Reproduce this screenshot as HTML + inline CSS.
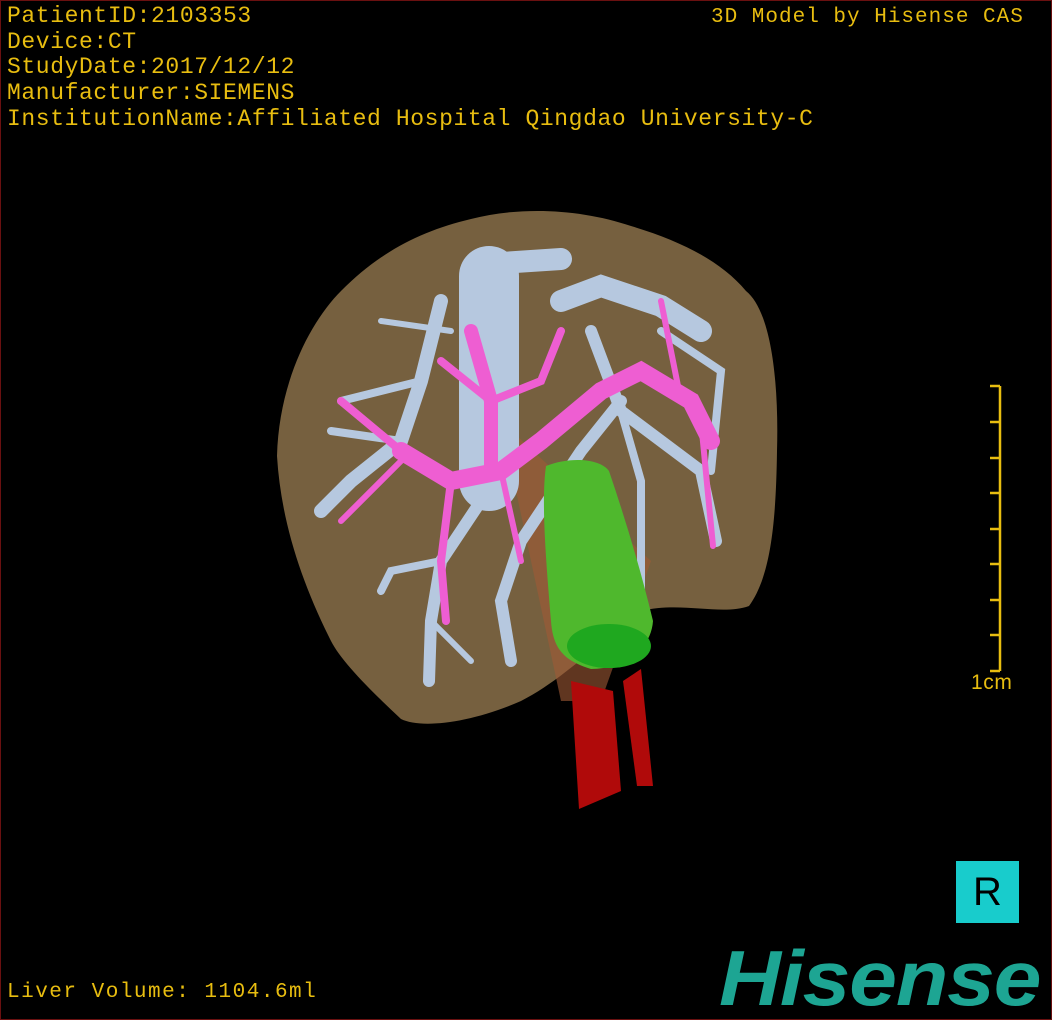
<!DOCTYPE html>
<html><head><meta charset="utf-8"><style>
html,body{margin:0;padding:0;background:#000;}
#c{position:relative;width:1050px;height:1018px;border:1px solid #6a1010;background:#000;overflow:hidden;}
.t{position:absolute;font-family:"Liberation Mono",monospace;font-size:23px;color:#e8bd10;letter-spacing:0.6px;white-space:pre;line-height:25.7px;}
svg{position:absolute;left:0;top:0;}
</style></head><body><div id="c">
<svg width="1050" height="1018" viewBox="0 0 1050 1018">
<path d="M470 218 C520 205 580 208 630 225 C680 240 720 260 745 290 C770 310 778 380 776 450 C775 520 770 575 748 605 C720 615 680 600 640 610 C600 640 560 680 520 700 C470 722 420 728 400 718 C370 690 340 660 330 640 C300 580 280 520 276 455 C278 380 310 320 340 290 C380 250 420 230 470 218 Z" fill="#76603f"/>
<path d="M500 420 L560 700 L600 700 L650 560 Z" fill="#a05a35" opacity="0.6"/>
<path d="M570 680 L612 690 L620 790 L578 808 Z" fill="#b00a0a"/>
<path d="M622 680 L640 668 L652 785 L636 785 Z" fill="#b00a0a"/>
<g fill="none" stroke="#b6c8df" stroke-linecap="round">
<path d="M488 275 L488 480" stroke-width="60"/>
<path d="M500 262 L560 258" stroke-width="22"/>
<path d="M560 300 L600 285 L660 305 L700 330" stroke-width="22"/>
<path d="M590 330 L620 410 L700 470 L715 540" stroke-width="12"/>
<path d="M620 400 L580 450 L520 540 L500 600 L510 660" stroke-width="12"/>
<path d="M620 410 L640 480 L640 600" stroke-width="8"/>
<path d="M660 330 L720 370 L710 470" stroke-width="8"/>
<path d="M440 300 L420 380 L400 440 L350 480 L320 510" stroke-width="14"/>
<path d="M400 440 L330 430" stroke-width="8"/>
<path d="M420 380 L340 400" stroke-width="8"/>
<path d="M480 500 L440 560 L430 620 L428 680" stroke-width="12"/>
<path d="M440 560 L390 570 L380 590" stroke-width="8"/>
<path d="M430 620 L470 660" stroke-width="6"/>
<path d="M450 330 L380 320" stroke-width="6"/>
</g>
<g fill="none" stroke="#ee5ed2" stroke-linecap="round">
<path d="M400 450 L450 480 L500 470 L540 440 L600 390 L640 370 L690 400 L710 440" stroke-width="18"/>
<path d="M490 470 L490 400 L470 330" stroke-width="14"/>
<path d="M490 400 L440 360" stroke-width="8"/>
<path d="M490 400 L540 380 L560 330" stroke-width="8"/>
<path d="M450 480 L440 560 L445 620" stroke-width="8"/>
<path d="M400 450 L340 400" stroke-width="8"/>
<path d="M400 460 L340 520" stroke-width="6"/>
<path d="M680 400 L660 300" stroke-width="6"/>
<path d="M700 420 L712 545" stroke-width="6"/>
<path d="M500 470 L520 560" stroke-width="6"/>
</g>
<path d="M545 465 C570 455 600 458 608 470 C625 520 640 570 652 620 C650 650 620 668 590 668 C565 660 552 650 550 620 C545 560 540 500 545 465 Z" fill="#4fb82d"/>
<ellipse cx="608" cy="645" rx="42" ry="22" fill="#1fa81f"/>
<g stroke="#e8bd10" stroke-width="2.5"><line x1="999" y1="385" x2="999" y2="670"/>
<line x1="989" y1="385" x2="999" y2="385"/><line x1="989" y1="421" x2="999" y2="421"/><line x1="989" y1="457" x2="999" y2="457"/><line x1="989" y1="492" x2="999" y2="492"/><line x1="989" y1="528" x2="999" y2="528"/><line x1="989" y1="563" x2="999" y2="563"/><line x1="989" y1="599" x2="999" y2="599"/><line x1="989" y1="634" x2="999" y2="634"/><line x1="989" y1="670" x2="999" y2="670"/></g>
</svg>
<div class="t" style="left:6px;top:3px">PatientID:2103353
Device:CT
StudyDate:2017/12/12
Manufacturer:SIEMENS
InstitutionName:Affiliated Hospital Qingdao University-C</div>
<div class="t" style="left:710px;top:4px;font-size:21px;letter-spacing:1.0px">3D Model by Hisense CAS</div>
<div class="t" style="left:970px;top:669px;font-family:'Liberation Sans',sans-serif;font-size:21px">1cm</div>
<div class="t" style="left:6px;top:979px;font-size:21px;letter-spacing:1.5px">Liver Volume: 1104.6ml</div>
<div style="position:absolute;left:955px;top:860px;width:63px;height:62px;background:#18cccc;color:#000;font:40px 'Liberation Sans',sans-serif;text-align:center;line-height:62px;">R</div>
<div style="position:absolute;left:718px;top:932px;font:italic bold 78px 'Liberation Sans',sans-serif;color:#1da593;letter-spacing:-1px;line-height:90px;transform:scaleX(1.1);transform-origin:0 0;">Hisense</div>
</div></body></html>
